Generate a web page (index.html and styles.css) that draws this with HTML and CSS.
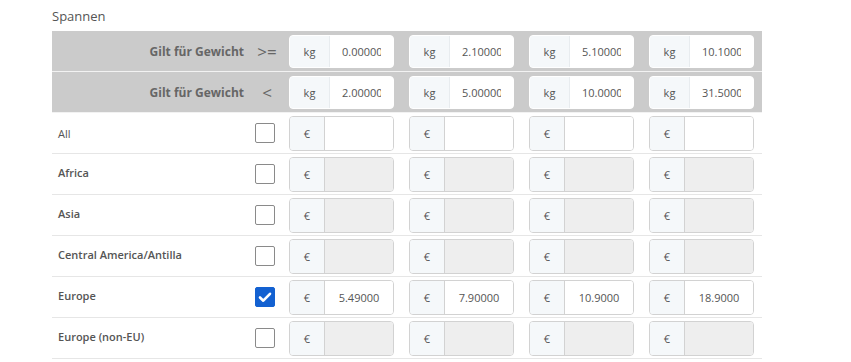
FILE: index.html
```html
<!DOCTYPE html>
<html>
<head>
  <title>Spannen</title>
  <link rel="stylesheet" href="styles.css">
</head>
<body>
  <div class="ranges">
    <h3>Spannen</h3>

    <div class="row head">
      <div class="label">Gilt für Gewicht</div>
      <div class="op">&gt;=</div>
      <div class="groups">
        <div class="group"><span class="addon">kg</span><input type="text" value="0.000000"></div>
        <div class="group"><span class="addon">kg</span><input type="text" value="2.100000"></div>
        <div class="group"><span class="addon">kg</span><input type="text" value="5.100000"></div>
        <div class="group"><span class="addon">kg</span><input type="text" value="10.100000"></div>
      </div>
    </div>
    <div class="row head">
      <div class="label">Gilt für Gewicht</div>
      <div class="op">&lt;</div>
      <div class="groups">
        <div class="group"><span class="addon">kg</span><input type="text" value="2.000000"></div>
        <div class="group"><span class="addon">kg</span><input type="text" value="5.000000"></div>
        <div class="group"><span class="addon">kg</span><input type="text" value="10.000000"></div>
        <div class="group"><span class="addon">kg</span><input type="text" value="31.500000"></div>
      </div>
    </div>

    <div class="row">
      <div class="label plain">All</div>
      <span class="check"></span>
      <div class="groups">
        <div class="group"><span class="addon">€</span><input type="text" value=""></div>
        <div class="group"><span class="addon">€</span><input type="text" value=""></div>
        <div class="group"><span class="addon">€</span><input type="text" value=""></div>
        <div class="group"><span class="addon">€</span><input type="text" value=""></div>
      </div>
    </div>
    <div class="row">
      <div class="label">Africa</div>
      <span class="check"></span>
      <div class="groups">
        <div class="group"><span class="addon">€</span><input type="text" disabled></div>
        <div class="group"><span class="addon">€</span><input type="text" disabled></div>
        <div class="group"><span class="addon">€</span><input type="text" disabled></div>
        <div class="group"><span class="addon">€</span><input type="text" disabled></div>
      </div>
    </div>
    <div class="row">
      <div class="label">Asia</div>
      <span class="check"></span>
      <div class="groups">
        <div class="group"><span class="addon">€</span><input type="text" disabled></div>
        <div class="group"><span class="addon">€</span><input type="text" disabled></div>
        <div class="group"><span class="addon">€</span><input type="text" disabled></div>
        <div class="group"><span class="addon">€</span><input type="text" disabled></div>
      </div>
    </div>
    <div class="row">
      <div class="label">Central America/Antilla</div>
      <span class="check"></span>
      <div class="groups">
        <div class="group"><span class="addon">€</span><input type="text" disabled></div>
        <div class="group"><span class="addon">€</span><input type="text" disabled></div>
        <div class="group"><span class="addon">€</span><input type="text" disabled></div>
        <div class="group"><span class="addon">€</span><input type="text" disabled></div>
      </div>
    </div>
    <div class="row">
      <div class="label">Europe</div>
      <span class="check checked">
        <svg viewBox="0 0 20 20" width="20" height="20"><path d="M5 10.5l3.3 3.2L15 6.8" fill="none" stroke="#fff" stroke-width="2.6" stroke-linecap="round" stroke-linejoin="round"/></svg>
      </span>
      <div class="groups">
        <div class="group"><span class="addon">€</span><input type="text" value="5.49000"></div>
        <div class="group"><span class="addon">€</span><input type="text" value="7.90000"></div>
        <div class="group"><span class="addon">€</span><input type="text" value="10.9000"></div>
        <div class="group"><span class="addon">€</span><input type="text" value="18.9000"></div>
      </div>
    </div>
    <div class="row">
      <div class="label">Europe (non-EU)</div>
      <span class="check"></span>
      <div class="groups">
        <div class="group"><span class="addon">€</span><input type="text" disabled></div>
        <div class="group"><span class="addon">€</span><input type="text" disabled></div>
        <div class="group"><span class="addon">€</span><input type="text" disabled></div>
        <div class="group"><span class="addon">€</span><input type="text" disabled></div>
      </div>
    </div>
  </div>
</body>
</html>
```

FILE: styles.css
```css
html {
  font-family: 'Open Sans', sans-serif;
}

body {
  margin: 0;
  background: #fff;
  color: #555;
}

.ranges {
  width: 710px;
  margin-left: 52px;
}

h3 {
  font-size: 13px;
  font-weight: 400;
  color: #555;
  margin: 0;
  padding-top: 7px;
  height: 24px;
  line-height: 18px;
}

.row {
  display: flex;
  align-items: center;
  height: 40px;
  padding: 0 8px 0 6px;
  border-bottom: 1px solid #e6e6e6;
}

.row.head {
  background: #cbcbcb;
  border-bottom: 1px solid #f2f2f2;
}

.label {
  flex: 1;
  font-size: 11px;
  font-weight: 600;
  color: #555;
  padding-bottom: 3px;
}

.label.plain {
  font-weight: 400;
  padding-bottom: 0;
}

.head .label {
  text-align: right;
  padding: 0 11px 0 0;
  font-size: 12px;
  font-weight: 700;
  color: #666;
}

.op {
  width: 24px;
  margin-right: 10px;
  text-align: center;
  font-size: 17px;
  font-weight: 400;
  color: #666;
}

.check {
  width: 18px;
  height: 18px;
  border: 1px solid #8a8a8a;
  border-radius: 2px;
  margin-right: 14px;
  background: #fff;
  display: flex;
}

.check.checked {
  background: #1361d1;
  border-color: #1361d1;
}

.check svg {
  margin: -1px;
}

.groups {
  display: flex;
  gap: 15px;
}

.group {
  display: flex;
  width: 105px;
  height: 35px;
  box-sizing: border-box;
  border: 1px solid #d2d2d2;
  border-radius: 4px;
  overflow: hidden;
  background: #fff;
}

.head .group {
  height: 33px;
  border-color: #fff;
}

.addon {
  width: 34px;
  flex: none;
  display: flex;
  align-items: center;
  justify-content: center;
  background: #f5f8fa;
  border-right: 1px solid #d2d2d2;
  font-size: 11px;
  color: #555;
}

.head .addon {
  width: 39px;
  border-right-color: #e8ecef;
}

.group input {
  flex: 1;
  min-width: 0;
  border: 0;
  padding: 0 12px;
  margin: 0;
  font-family: 'Open Sans', sans-serif;
  font-size: 11px;
  color: #555;
  text-align: center;
  background: #fff;
  outline: none;
}

.group input:disabled {
  background: #eeeeee;
}
```
